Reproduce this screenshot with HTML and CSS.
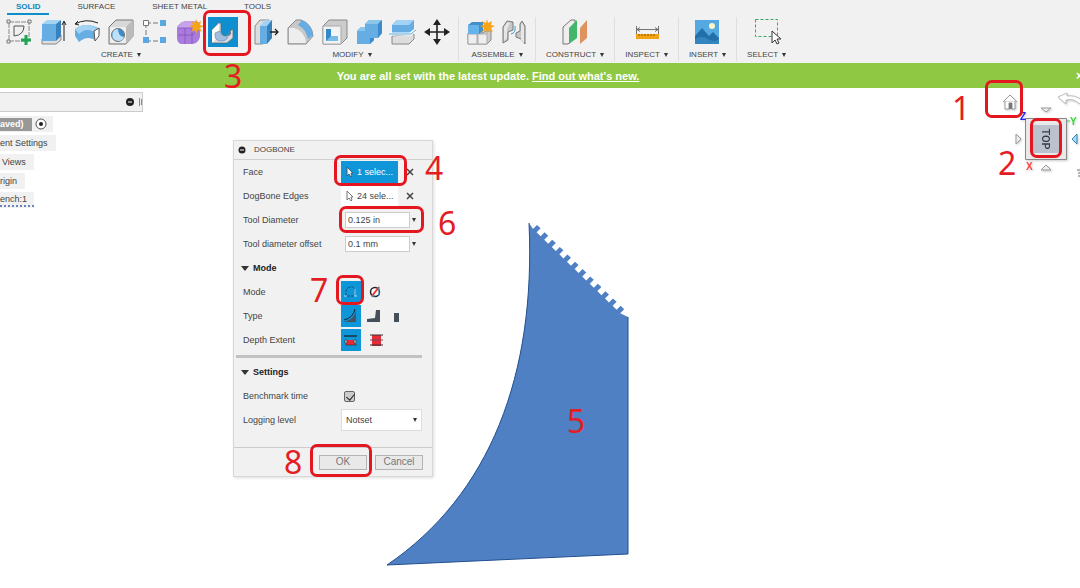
FILE: index.html
```html
<!DOCTYPE html>
<html lang="en">
<head>
<meta charset="utf-8">
<title>Dogbone</title>
<link rel="stylesheet" href="styles.css">
</head>
<body>
<header class="ribbon">
  <nav class="tabs">
    <a class="tab tab-active" href="#solid">SOLID</a>
    <a class="tab" href="#surface">SURFACE</a>
    <a class="tab" href="#sheet">SHEET METAL</a>
    <a class="tab" href="#tools">TOOLS</a>
  </nav>
  <div class="groups">
    <section class="group group-create">
      <div class="icons">
        <button class="tool" aria-label="Create sketch"><svg viewBox="0 0 30 30"><path d="M5 5H25V24H5Z" fill="none" stroke="#888" stroke-dasharray="5 1"/><path d="M10 9H20Q20 18 10 19Z" fill="none" stroke="#555"/><path d="M3 3h3v3H3zM24 3h3v3h-3zM3 23h3v3H3z" fill="#eee" stroke="#777"/><path d="M22 18v10M17 23h10" stroke="#21a355" stroke-width="3"/></svg></button>
        <button class="tool" aria-label="Extrude"><svg viewBox="0 0 30 30"><path d="M4 22v5h14l5-4v-5z" fill="#ddd" stroke="#888"/><path d="M4 7l5-4h14l-5 4z" fill="#a3d3f4"/><path d="M4 7h14v17H4z" fill="#65ade2"/><path d="M18 7l5-4v16l-5 5z" fill="#3782bd"/><path d="M26 24V5M24 8l2-4 2 4" fill="none" stroke="#222"/></svg></button>
        <button class="tool" aria-label="Revolve"><svg viewBox="0 0 30 30"><path d="M3 12Q14 4 28 12L23 23Q15 18 7 25L3 19Z" fill="#65ade2"/><path d="M3 12Q14 4 26 12L22 15Q14 10 7 17Z" fill="#a3d3f4"/><path d="M22 14l5-3v8l-4 5z" fill="#fff" stroke="#555"/><path d="M3 7Q14 1 26 6M6 4L3 7l4 1" fill="none" stroke="#222"/></svg></button>
        <button class="tool" aria-label="Hole"><svg viewBox="0 0 30 30"><path d="M3 10l7-7h17v16l-7 8H3z" fill="#d8d8d8" stroke="#777"/><path d="M4 10h16v16H4z" fill="#eee"/><path d="M20 10l7-7v16l-7 8z" fill="#bbb"/><circle cx="12" cy="18" r="6.500" fill="#3c8bcb" stroke="#777"/><path d="M12 12a6 6 0 1 0 6 8Q12 19 12 12" fill="#bce0f7"/></svg></button>
        <button class="tool" aria-label="Pattern"><svg viewBox="0 0 30 30"><path d="M6 6h17M6 6v18M6 24h17" fill="none" stroke="#777" stroke-dasharray="5 2"/><path d="M3.500 3.500h5v5h-5z" fill="#fff" stroke="#777"/><path d="M20 3h6v6h-6zM3 20h6v6H3zM20 20h6v6h-6z" fill="#59a9df"/></svg></button>
        <button class="tool" aria-label="Create form"><svg viewBox="0 0 30 30"><path d="M3 10Q7 4 13 4H21Q25 6 26 12V20Q24 27 18 27H7Q3 26 3 20Z" fill="#aa7bdc"/><path d="M3 11Q7 4 14 4h10l-6 7Z" fill="#c5a2eb"/><path d="M18 12v15M4 18h14l7-5M11 11v16M4 11h14l6-6" fill="none" stroke="#7f4eb7" stroke-width=".7"/><path d="M22 2l1.500 4L27 4l-1 4 4 1-4 2 2 4-4-2-2 4-1-4-4 2 2-4-4-2 4-1-2-4 4 2z" fill="#f5a318"/></svg></button>
        <button class="tool tool-active" aria-label="Dogbone"><svg viewBox="0 0 30 30"><path d="M4 26V13L11 6H13V14Q14 20 19 19T22 14L25 12V21L19 26Z" fill="#d9dcdf" stroke="#53626d" stroke-width=".7"/><path d="M4 13l7-7v8q-6 1-3 8l-4 4z" fill="#fff"/><path d="M7 16Q6 24 13 24T20 18L22 14Q20 20 16 19T12 14Z" fill="#9fbfe0" stroke="#6484a5" stroke-width=".6"/></svg></button>
      </div>
      <button class="group-label">CREATE <span class="caret"></span></button>
    </section>
    <section class="group">
      <div class="icons">
        <button class="tool" aria-label="Press pull"><svg viewBox="0 0 30 30"><path d="M3 9l5-6h9v18l-6 6H3z" fill="#ddd" stroke="#888"/><path d="M8 9h7v18H8z" fill="#65ade2"/><path d="M8 9l5-6h8l-6 6z" fill="#a3d3f4"/><path d="M15 9l5-6v18l-5 6z" fill="#3782bd"/><path d="M18 15h8M23 12l3 3-3 3" fill="none" stroke="#222" stroke-width="1.300"/></svg></button>
        <button class="tool" aria-label="Fillet"><svg viewBox="0 0 30 30"><path d="M2 11l8-8h5q11 4 12 16l-7 8H2z" fill="#c8c8c8" stroke="#888"/><path d="M3 11h5q11 3 12 15H3z" fill="#eee"/><path d="M12 8l4-5q10 5 11 15l-5 4Q20 12 12 8" fill="#65ade2"/></svg></button>
        <button class="tool" aria-label="Shell"><svg viewBox="0 0 30 30"><path d="M3 9l6-6h18v18l-6 6H3z" fill="#ccc" stroke="#888"/><path d="M3 9h18v18H3z" fill="#f2f2f2" stroke="#aaa"/><path d="M6 12h12v12H6z" fill="#3388c5"/><path d="M11 12h7v7h-7z" fill="#f1f5f8"/><path d="M6 24l5-5h7v5z" fill="#77bce9"/></svg></button>
        <button class="tool" aria-label="Combine"><svg viewBox="0 0 30 30"><path d="M3 14l4-4h4V7l4-4h13v13l-4 5h-4v2l-4 4H3z" fill="#65ade2"/><path d="M11 7l4-4h13l-4 4zM3 14l4-4h4v4z" fill="#8ac5ec"/><path d="M24 7l4-4v13l-4 5zM16 21h4v2l-4 4z" fill="#3b8ccc"/></svg></button>
        <button class="tool" aria-label="Split body"><svg viewBox="0 0 30 30"><path d="M4 19v8h17l5-5v-5z" fill="#ddd" stroke="#888"/><path d="M4 8l5-5h17v9l-5 4H4z" fill="#65ade2"/><path d="M4 8l5-5h17l-5 5z" fill="#a3d3f4"/><path d="M1 17h22l5-4" fill="none" stroke="#fff" stroke-width="3"/><path d="M1 17h22l5-4" fill="none" stroke="#4fa5dc"/></svg></button>
        <button class="tool" aria-label="Move"><svg viewBox="0 0 30 30"><path d="M15 5v20M5 15h20" stroke="#222" stroke-width="1.600"/><path d="M15 2l4 6h-8zM15 28l4-6h-8zM2 15l6-4v8zM28 15l-6-4v8z" fill="#222"/></svg></button>
      </div>
      <button class="group-label">MODIFY <span class="caret"></span></button>
    </section>
    <section class="group">
      <div class="icons">
        <button class="tool" aria-label="New component"><svg viewBox="0 0 30 30"><path d="M3 16h14l4-2h5v9l-4 4H3z" fill="#ccc" stroke="#888"/><path d="M3 17h9v10H3zM13 17h9v10h-9z" fill="#eee" stroke="#aaa"/><path d="M3 8l4-3h11v9l-4 3H3z" fill="#438fc9"/><path d="M3 8h11v9H3z" fill="#65b3e8"/><path d="M22 2l1 4 4-2-1 4 4 1-4 2 2 4-4-2-2 4-1-4-4 2 2-4-4-2 4-1-2-4 4 2z" fill="#f5a318"/></svg></button>
        <button class="tool" aria-label="Joint"><svg viewBox="0 0 30 30"><path d="M4 26V10l4-6 6 1v8l-5 2v8zM26 27V9l-3-5-2 3v7l-4 2v4l5 2z" fill="#c7c7c7" stroke="#777"/><path d="M5 24V10l4-5 2 1-3 6v9zM25 26V10l-2-4-1 2v15z" fill="#e6e6e6"/><path d="M12 17q5-1 4-8" fill="none" stroke="#3998d1"/></svg></button>
      </div>
      <button class="group-label">ASSEMBLE <span class="caret"></span></button>
    </section>
    <section class="group group-wide">
      <div class="icons">
        <button class="tool" aria-label="Construct plane"><svg viewBox="0 0 30 30"><path d="M3 10l8-7h4v18l-7 6H3z" fill="#eee" stroke="#777"/><path d="M9 11l8-8v18l-8 6z" fill="#42b76b"/><path d="M20 11l7-8v18l-7 6z" fill="#df915e"/></svg></button>
      </div>
      <button class="group-label">CONSTRUCT <span class="caret"></span></button>
    </section>
    <section class="group group-wide">
      <div class="icons">
        <button class="tool" aria-label="Measure"><svg viewBox="0 0 30 30"><path d="M4.500 9v8M26.500 9v8M5 12.500h21M8 10.500l-3 2 3 2M23 10.500l3 2-3 2" fill="none" stroke="#555" stroke-width=".8"/><path d="M4 17h23v5H4z" fill="#f2a314"/><path d="M7 17v2M10 17v2M13 17v2M16 17v2M19 17v2M22 17v2" stroke="#8d5700"/></svg></button>
      </div>
      <button class="group-label">INSPECT <span class="caret"></span></button>
    </section>
    <section class="group group-wide">
      <div class="icons">
        <button class="tool" aria-label="Insert image"><svg viewBox="0 0 30 30"><path d="M3 3h24v24H3z" fill="#55a9e2"/><path d="M3 19l7-8 7 8 4-4 6 6v6H3z" fill="#246faa"/><path d="M3 22q7-4 13 0t11 0v5H3z" fill="#3385c0"/><circle cx="20" cy="9" r="3" fill="#fff6c8"/></svg></button>
      </div>
      <button class="group-label">INSERT <span class="caret"></span></button>
    </section>
    <section class="group group-last">
      <div class="icons">
        <button class="tool" aria-label="Select"><svg viewBox="0 0 30 30"><path d="M3.500 2.500h22v17h-22z" fill="none" stroke="#36a969" stroke-dasharray="3 2"/><path d="M20 14v12l3-3 2 4 2-1-2-4h4z" fill="#fff" stroke="#333"/></svg></button>
      </div>
      <button class="group-label">SELECT <span class="caret"></span></button>
    </section>
  </div>
</header>
<div class="banner">
  <p class="banner-text">You are all set with the latest update. <a class="banner-link" href="#new">Find out what's new.</a></p>
  <button class="banner-close" aria-label="Close">×</button>
</div>
<main class="canvas">
  <aside class="browser">
    <div class="browser-bar">
      <svg class="bar-icon" viewBox="0 0 16 10"><circle cx="4" cy="5" r="4" fill="#222"/><path d="M2 5h4" stroke="#fff"/><path d="M13.500 1v8M15.500 2v6" stroke="#888"/></svg>
    </div>
    <ul class="tree">
      <li class="node node-root"><span class="node-name">aved)</span><svg class="radio-icon" viewBox="0 0 12 12"><circle cx="6" cy="6" r="5" fill="#fff" stroke="#555"/><circle cx="6" cy="6" r="2" fill="#222"/></svg></li>
      <li class="node node-settings">ent Settings</li>
      <li class="node">Views</li>
      <li class="node node-origin">rigin</li>
      <li class="node node-bench"><span class="node-mark">ench:1</span></li>
    </ul>
  </aside>

  <svg class="part" viewBox="386 221 244 346">
    <path d="M529 223L533 229l4-4 3.600 3.300-4 4 4 4.050 4-4 3.600 3.300-4 4 4 4.050 4-4 3.600 3.300-4 4 4 4.050 4-4 3.600 3.300-4 4 4 4.050 4-4 3.600 3.300-4 4 4 4.050 4-4 3.600 3.300-4 4 4 4.050 4-4 3.600 3.300-4 4 4 4.050 4-4 3.600 3.300-4 4 4 4.050 4-4 3.600 3.300-4 4 4 4.050 4-4 3.600 3.300-4 4 4 4.050 4-4 3.600 3.300-4 4 4 4.050 4-4 3.600 3.300-4 4L628 317V554L387 565C490 495 536 375 529 223Z" fill="#4e80c3"/>
    <path d="M628 317V554L387 565C490 495 536 375 529 223" fill="none" stroke="#24508f"/>
  </svg>

  <form class="dialog">
    <h1 class="dialog-title"><svg class="dot-icon" viewBox="0 0 8 8"><circle cx="4" cy="4" r="3.500" fill="#222"/><path d="M2 4h4" stroke="#fff"/></svg>DOGBONE</h1>
    <div class="rows">
      <div class="row"><span class="label">Face</span><button type="button" class="pick pick-active"><svg class="cursor" viewBox="0 0 8 12"><path d="M1 1v9l2-2 2 3 1-1-1-3h2z" fill="#e9f3fa" stroke="#44606e"/></svg>1 selec...</button><button type="button" class="clear" aria-label="Clear face"><svg viewBox="0 0 8 8"><path d="M1 1l6 6M7 1L1 7" stroke="#444" stroke-width="1.500"/></svg></button></div>
      <div class="row"><span class="label">DogBone Edges</span><button type="button" class="pick"><svg class="cursor" viewBox="0 0 8 12"><path d="M1 1v9l2-2 2 3 1-1-1-3h2z" fill="#fff" stroke="#777"/></svg>24 sele...</button><button type="button" class="clear" aria-label="Clear edges"><svg viewBox="0 0 8 8"><path d="M1 1l6 6M7 1L1 7" stroke="#444" stroke-width="1.500"/></svg></button></div>
      <div class="row"><label class="label" for="dia">Tool Diameter</label><input class="field" id="dia" value="0.125 in"><span class="caret"></span></div>
      <div class="row"><label class="label" for="off">Tool diameter offset</label><input class="field" id="off" value="0.1 mm"><span class="caret"></span></div>
      <h2 class="section"><span class="caret caret-big"></span>Mode</h2>
      <div class="row"><span class="label">Mode</span><div class="options">
        <button type="button" class="option option-on" aria-label="Selected edges"><svg viewBox="0 0 20 22"><path d="M5 15V11q0-4 4-5t5 4v5z" fill="none" stroke="#174e75" stroke-dasharray="3 1"/><path d="M3 15h3M13 15h3M14 8v7" stroke="#9bdcff"/></svg></button>
        <button type="button" class="option" aria-label="All edges"><svg viewBox="0 0 20 22"><circle cx="8" cy="11" r="4.500" fill="#fff" stroke="#222" stroke-width="1.500"/><path d="M5 15l7-9" stroke="#e33" stroke-width="2"/><path d="M12 6v9M4 15h4" stroke="#39a5dd"/></svg></button></div></div>
      <div class="row"><span class="label">Type</span><div class="options">
        <button type="button" class="option option-on" aria-label="Normal"><svg viewBox="0 0 20 22"><path d="M3 17Q14 14 15 5V17z" fill="#45545f"/><path d="M3 15Q12 13 14 4" fill="none" stroke="#17252e"/></svg></button>
        <button type="button" class="option" aria-label="Minimal"><svg viewBox="0 0 20 22"><path d="M9 5h4v12H0v-3l8-1z" fill="#45505a"/></svg></button>
        <button type="button" class="option" aria-label="Mortise"><svg viewBox="0 0 20 22"><path d="M1 8h5v9H1z" fill="#45505a"/></svg></button></div></div>
      <div class="row"><span class="label">Depth Extent</span><div class="options">
        <button type="button" class="option option-on" aria-label="From face"><svg viewBox="0 0 20 22"><path d="M3 7h13" stroke="#173343" stroke-width="1.500"/><path d="M5 11h10v5H5z" fill="#e72c37"/><path d="M4 11h2v3H4zM13 11h2v3h-2zM4 16h12" fill="#ddd" stroke="#333" stroke-width=".7"/></svg></button>
        <button type="button" class="option" aria-label="Through"><svg viewBox="0 0 20 22"><path d="M5 6h9v11H5z" fill="#e72c37"/><path d="M3 6h13M3 16h13" stroke="#333"/><path d="M3 11h13" stroke="#77455a"/></svg></button></div></div>
      <hr class="rule">
      <h2 class="section"><span class="caret caret-big"></span>Settings</h2>
      <div class="row"><label class="label" for="bench">Benchmark time</label><input class="check" type="checkbox" id="bench" checked></div>
      <div class="row"><label class="label" for="log">Logging level</label><span class="select-wrap"><select class="select" id="log"><option>Notset</option></select><span class="caret select-caret"></span></span></div>
    </div>
    <footer class="actions"><button type="button" class="action">OK</button><button type="button" class="action">Cancel</button></footer>
  </form>

  <div class="viewcube">
    <svg class="cube-art" viewBox="0 0 140 100">
      <path d="M63 14l7-7 7 7M65 13v8h4v-6h3v6h3v-8" fill="#fff" stroke="#999"/><path d="M69 15h3v6h-3z" fill="#777"/>
      <path d="M140 16q-7-6-14-4V16l-8-7 9-4v3q8-1 13 3" fill="#fff" stroke="#bbb"/>
      <path d="M101 20h10l-5 4zM101 82h10l-5-5zM76 46v10l5-5z" fill="#eee" stroke="#999"/>
      <path d="M137 46v10l-5-5z" fill="#a9daf5" stroke="#3b87b5"/>
      <path d="M85.500 30.500h41v41h-41z" fill="#e9e9ea" stroke="#888"/><path d="M92 37h29v28H92z" fill="#bcc1ce"/>
      <path d="M127 33h3" stroke="#3d3"/><path d="M140 82h-3M140 85h-2M140 88h-2" stroke="#777"/>
      <text class="axis axis-z" x="80" y="32">Z</text><text class="axis axis-y" x="130" y="37">Y</text><text class="axis axis-x" x="86" y="82">X</text>
      <text class="face-name" x="106" y="51" transform="rotate(90 106 51)" dy="4">TOP</text>
    </svg>
    <span class="ring ring-home"></span><span class="ring ring-top"></span>
    <span class="step step-1">1</span><span class="step step-2">2</span>
  </div>
</main>
<div class="notes">
  <span class="ring ring-tool"></span><span class="ring ring-face"></span><span class="ring ring-dia"></span><span class="ring ring-mode"></span><span class="ring ring-ok"></span>
  <span class="step step-3">3</span><span class="step step-4">4</span><span class="step step-5">5</span><span class="step step-6">6</span><span class="step step-7">7</span><span class="step step-8">8</span>
</div>
</body>
</html>
```
FILE: styles.css
```css
* { box-sizing: border-box; }
body {
  margin: 0;
  min-height: 100vh;
  display: flex;
  flex-direction: column;
  position: relative;
  overflow-x: hidden;
  background: #fff;
  color: #444;
  font: 9px/12px "Liberation Sans", Arial, sans-serif;
}
button, input, select { font: inherit; color: inherit; margin: 0; padding: 0; border: 0; background: none; }
svg { display: block; }

.ribbon { background: #f1f1f1; height: 63px; font: 8px/12px "Liberation Sans", Arial, sans-serif; }
.tabs { display: flex; gap: 19px; padding-left: 7px; height: 15px; }
.tab { padding: 0 9px; height: 15px; line-height: 13px; color: #444; text-decoration: none; }
.tab-active { color: #0b84bd; font-weight: bold; border-bottom: 2px solid #0f8fc9; }
.groups { display: flex; padding-top: 2px; }
.group { display: flex; flex-direction: column; align-items: center; padding: 0 6px; border-right: 1px solid #dedede; }
.group-create { padding: 0 7px 0 4px; border-right-color: #f1f1f1; }
.group-wide { padding: 0 10px; }
.group-last { border-right: 0; padding: 0 10px; }
.icons { display: flex; gap: 4px; }
.tool { width: 30px; height: 30px; }
.tool svg { width: 30px; height: 30px; }
.tool-active { background: #0f8fd0; }
.group-label { display: flex; align-items: center; gap: 4px; height: 14px; padding-top: 2px; }
.caret { width: 0; height: 0; flex: none; border: 2px solid transparent; border-top: 4px solid #333; border-bottom: 0; }
.caret-big { border-width: 5px 4px 0; }

.banner { display: flex; align-items: center; height: 25px; background: #8fc843; color: #fff; position: relative; }
.banner-text { margin: 0; flex: 1; text-align: center; padding-right: 104px; font: bold 11px/16px "Liberation Sans", Arial, sans-serif; }
.banner-link { color: #fff; }
.banner-close { position: absolute; right: -3px; font: bold 12px/16px "Liberation Sans", sans-serif; }

.canvas { flex: 1; position: relative; min-height: 500px; }
.browser { padding-top: 4px; width: 143px; }
.browser-bar { height: 20px; background: #f1f1f1; border: 1px solid #ccc; border-left: 0; display: flex; align-items: center; justify-content: flex-end; }
.bar-icon { width: 16px; height: 10px; }
.tree { list-style: none; margin: 0; padding: 4px 0 0; display: flex; flex-direction: column; align-items: flex-start; gap: 3px; }
.node { display: flex; align-items: center; height: 16px; padding: 0 8px 0 2px; background: #f1f1f1; }
.node-root { padding: 0 6px 0 0; gap: 3px; }
.node-name { background: #989898; color: #fff; font-weight: bold; padding: 0 8px 0 0; line-height: 13px; }
.radio-icon { width: 12px; height: 12px; }
.node-settings, .node-origin { padding-left: 0; }
.node-bench { padding: 0; }
.node-mark { padding-right: 7px; border-bottom: 2px dotted #6a83bd; }

.part { position: absolute; left: 386px; top: 133px; width: 244px; height: 346px; }

.dialog { position: absolute; left: 233px; top: 52px; width: 200px; background: #f1f1f1; border: 1px solid #d8d8d8; box-shadow: 1px 1px 3px #ddd; }
.dialog-title { display: flex; align-items: center; gap: 8px; margin: 0; padding-left: 4px; height: 19px; font: 8px/12px "Liberation Sans", Arial, sans-serif; border-bottom: 1px solid #d0d0d0; }
.dot-icon { width: 8px; height: 8px; }
.rows { padding-bottom: 15px; }
.row { display: flex; align-items: center; height: 24px; padding-left: 9px; }
.label { width: 98px; flex: none; }
.pick { display: flex; align-items: center; gap: 3px; width: 57px; height: 22px; padding-left: 5px; background: #fff; white-space: nowrap; }
.pick-active { background: #0f96d8; color: #fff; }
.cursor { width: 8px; height: 12px; }
.clear { margin-left: 8px; width: 8px; height: 8px; }
.clear svg { width: 8px; height: 8px; }
.field { width: 65px; height: 16px; margin: 0 2px 0 4px; padding: 0 2px; background: #fff; border: 1px solid #ccc; }
.section { display: flex; align-items: center; gap: 4px; height: 24px; margin: 0; padding-left: 7px; font: bold 9px/12px "Liberation Sans", Arial, sans-serif; color: #222; }
.options { display: flex; gap: 6px; }
.option { width: 20px; height: 22px; }
.option svg { width: 20px; height: 22px; }
.option-on { background: #0f96d8; }
.rule { margin: 3px 10px 2px 2px; border: 0; height: 3px; background: #c2c2c2; }
.check { appearance: none; width: 11px; height: 11px; margin-left: 3px; border: 1px solid #666; border-radius: 2px; background: #ccc; }
.check:checked::before { content: ""; display: block; width: 4px; height: 7px; margin-left: 3px; border: solid #222; border-width: 0 1px 1px 0; transform: rotate(40deg); }
.select-wrap { position: relative; }
.select { appearance: none; display: block; width: 81px; height: 22px; padding: 0 4px; background: #fff; border: 1px solid #ddd; }
.select-caret { position: absolute; right: 5px; top: 9px; }
.actions { display: flex; justify-content: flex-end; align-items: center; gap: 8px; height: 29px; padding-right: 9px; border-top: 1px solid #ccc; }
.action { width: 48px; height: 15px; background: #e9e9e9; border: 1px solid #b4b4b4; font-size: 10px; line-height: 12px; color: #777; }

.viewcube { position: absolute; right: 0; top: 0; width: 140px; }
.cube-art { width: 140px; height: 100px; filter: drop-shadow(1px 1px 1px #ccc); }
.axis { font: bold 10px "Liberation Sans", sans-serif; }
.axis-x { fill: #f44; }
.axis-y { fill: #3d3; }
.axis-z { fill: #22f; }
.face-name { font: 500 11px Roboto, sans-serif; fill: #333a48; text-anchor: middle; }

.notes { position: absolute; left: 0; top: 0; pointer-events: none; }
.ring { position: absolute; border: 3px solid #e4161f; border-radius: 7px; }
.ring-home { left: 45px; top: -8px; width: 38px; height: 38px; }
.ring-top { left: 90px; top: 30px; width: 32px; height: 40px; }
.ring-tool { left: 203px; top: 10px; width: 48px; height: 46px; }
.ring-face { left: 334px; top: 155px; width: 73px; height: 31px; }
.ring-dia { left: 339px; top: 206px; width: 85px; height: 27px; }
.ring-mode { left: 336px; top: 275px; width: 28px; height: 30px; }
.ring-ok { left: 310px; top: 444px; width: 62px; height: 33px; }
.step { position: absolute; font: 32px/32px "Noto Sans", sans-serif; color: #e41d25; }
.step-1 { left: 12px; top: 4px; }
.step-2 { left: 58px; top: 59px; }
.step-3 { left: 224px; top: 60px; }
.step-4 { left: 425px; top: 152px; }
.step-5 { left: 567px; top: 405px; }
.step-6 { left: 438px; top: 207px; }
.step-7 { left: 310px; top: 274px; }
.step-8 { left: 284px; top: 446px; }
```
